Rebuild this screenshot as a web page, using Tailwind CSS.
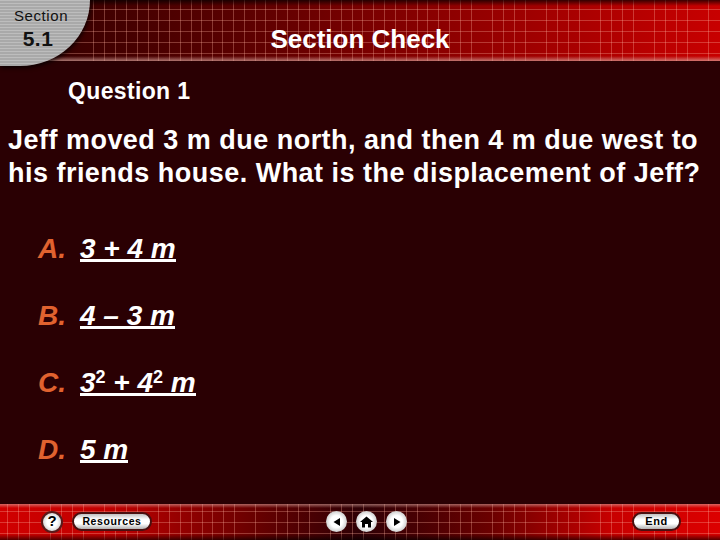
<!DOCTYPE html>
<html>
<head>
<meta charset="utf-8">
<script src="https://cdn.jsdelivr.net/npm/@tailwindcss/browser@4"></script>
</head>
<body class="m-0">
<div class="w-[720px] h-[540px] overflow-hidden flex flex-col bg-[#2a0003] font-['Liberation_Sans',Arial,sans-serif] text-white">
  <header class="relative h-[61px] shrink-0 bg-[linear-gradient(90deg,#2e0000_0%,#5a0000_33%,#8a0000_60%,#c80000_100%)]">
    <svg class="absolute inset-0" width="720" height="61" viewBox="0 0 720 61" fill="none" stroke="#ffb0a0" stroke-opacity=".32" stroke-width="1">
      <path d="M93.5 0V61M104.5 0V61M115.5 0V61M126.5 0V61M137.5 0V61M148.5 0V61M158.5 0V61M169.5 0V61M180.5 0V61M191.5 0V61M201.5 0V61M212.5 0V61M222.5 0V61M233.5 0V61M244.5 0V61M255.5 0V61M265.5 0V61M276.5 0V61M287.5 0V61M298.5 0V61M309.5 0V61M319.5 0V61M330.5 0V61M341.5 0V61M352.5 0V61M362.5 0V61M373.5 0V61M384.5 0V61M395.5 0V61M406.5 0V61M417.5 0V61M427.5 0V61M438.5 0V61M449.5 0V61M460.5 0V61M471.5 0V61M492.5 0V61M503.5 0V61M514.5 0V61M525.5 0V61M546.5 0V61M557.5 0V61M568.5 0V61M579.5 0V61M600.5 0V61M611.5 0V61M622.5 0V61M633.5 0V61M654.5 0V61M665.5 0V61M676.5 0V61M687.5 0V61M708.5 0V61"/>
      <path d="M60 9.5H720M60 20.5H720M60 31.5H720M60 42.5H720M60 53.5H720"/>
    </svg>
    <div class="absolute inset-x-0 top-0 h-[6px] bg-gradient-to-b from-black/70 to-transparent"></div>
    <div class="absolute inset-x-0 bottom-0 h-[5px] bg-gradient-to-b from-transparent to-[#d9a8a0]/70"></div>
    <div class="absolute left-0 top-0 w-[90px] h-[66px] pr-[8px] rounded-br-[70px_66px] shadow-[1px_2px_4px_rgba(0,0,0,0.75)] bg-[repeating-linear-gradient(180deg,#bdbdbd_0px,#bdbdbd_1px,#a9a9a9_1px,#a9a9a9_3px)] flex flex-col items-center text-[#111]">
      <span class="text-[15px] leading-[16px] mt-[8px] tracking-[0.6px]">Section</span>
      <span class="text-[21px] leading-[24px] mt-[3px] mr-[6px] font-bold tracking-[0.5px]">5.1</span>
    </div>
    <h1 class="relative text-center pt-[25px] text-[26px] leading-[28px] font-bold">Section Check</h1>
  </header>

  <main class="flex-1 flex flex-col">
    <p class="pl-[68px] mt-[17px] text-[23px] leading-[26px] font-bold tracking-[0.35px]">Question 1</p>
    <p class="pl-[8px] mt-[20px] text-[27px] leading-[33px] font-bold tracking-[0.48px] whitespace-nowrap">Jeff moved 3 m due north, and then 4 m due west to<br>his friends house. What is the displacement of Jeff?</p>
    <ul class="pl-[38px] mt-[42px] flex flex-col gap-[33px] text-[28px] leading-[34px] font-bold italic">
      <li class="flex gap-[14px] h-[34px]"><span class="text-[#e0622f]">A.</span><span class="h-[30px] border-b-[3px] border-white">3 + 4 m</span></li>
      <li class="flex gap-[14px] h-[34px]"><span class="text-[#e0622f]">B.</span><span class="h-[30px] border-b-[3px] border-white">4 – 3 m</span></li>
      <li class="flex gap-[14px] h-[34px]"><span class="text-[#e0622f]">C.</span><span class="h-[30px] border-b-[3px] border-white">3<sup class="text-[18px] leading-none not-italic">2</sup> + 4<sup class="text-[18px] leading-none not-italic">2</sup> m</span></li>
      <li class="flex gap-[14px] h-[34px]"><span class="text-[#e0622f]">D.</span><span class="h-[30px] border-b-[3px] border-white">5 m</span></li>
    </ul>
  </main>

  <footer class="relative h-[36px] shrink-0 bg-[linear-gradient(90deg,#d00000_0%,#c00000_15%,#6a0000_35%,#2e0005_50%,#6a0000_68%,#c80000_85%,#dc0000_100%)]">
    <svg class="absolute inset-0" width="720" height="36" viewBox="0 0 720 36" fill="none" stroke="#ffb0a0" stroke-opacity=".32" stroke-width="1">
      <path d="M7.5 0V36M18.5 0V36M29.5 0V36M50.5 0V36M61.5 0V36M72.5 0V36M83.5 0V36M104.5 0V36M115.5 0V36M126.5 0V36M137.5 0V36M158.5 0V36M169.5 0V36M180.5 0V36M191.5 0V36M202.5 0V36M212.5 0V36M223.5 0V36M234.5 0V36M255.5 0V36M276.5 0V36M287.5 0V36M298.5 0V36M309.5 0V36M330.5 0V36M341.5 0V36M352.5 0V36M363.5 0V36M384.5 0V36M395.5 0V36M406.5 0V36M417.5 0V36M438.5 0V36M449.5 0V36M460.5 0V36M471.5 0V36M492.5 0V36M503.5 0V36M514.5 0V36M525.5 0V36M546.5 0V36M557.5 0V36M568.5 0V36M579.5 0V36M600.5 0V36M611.5 0V36M622.5 0V36M633.5 0V36M654.5 0V36M665.5 0V36M676.5 0V36M687.5 0V36M708.5 0V36"/>
      <path d="M0 7.5H720M0 18.5H720M0 29.5H720"/>
    </svg>
    <div class="absolute inset-x-0 top-0 h-[4px] bg-gradient-to-b from-[#d9a8a0]/60 to-transparent"></div>
    <div class="absolute inset-x-0 bottom-0 h-[6px] bg-gradient-to-b from-transparent to-black/60"></div>
    <nav class="relative h-full flex items-center pl-[41px] pb-[1px]">
      <div class="w-[22px] h-[22px] rounded-full border-2 border-[#5a1a1a] bg-[radial-gradient(circle,#ffffff_40%,#b0b0b0_100%)] flex items-center justify-center text-black text-[15px] font-bold">?</div>
      <div class="ml-[9px] w-[80px] h-[19px] rounded-full border-2 border-[#4a1010] bg-[linear-gradient(180deg,#c0c0c0_0%,#ffffff_35%,#ffffff_65%,#b0b0b0_100%)] flex items-center justify-center text-black text-[10.5px] font-bold tracking-[0.6px]">Resources</div>
      <div class="ml-[174px] w-[21px] h-[21px] rounded-full bg-[radial-gradient(circle,#ffffff_40%,#a0a0a0_100%)] flex items-center justify-center">
        <svg width="10" height="10" viewBox="0 0 10 10"><path d="M8 1V9L1.5 5Z" fill="#000"/></svg>
      </div>
      <div class="ml-[9px] w-[21px] h-[21px] rounded-full bg-[radial-gradient(circle,#ffffff_40%,#a0a0a0_100%)] flex items-center justify-center">
        <svg width="13" height="12" viewBox="0 0 13 12"><path d="M6.5 0.5L13 6H11V11.5H8V8H5V11.5H2V6H0Z" fill="#000"/></svg>
      </div>
      <div class="ml-[9px] w-[21px] h-[21px] rounded-full bg-[radial-gradient(circle,#ffffff_40%,#a0a0a0_100%)] flex items-center justify-center">
        <svg width="10" height="10" viewBox="0 0 10 10"><path d="M2 1V9L8.5 5Z" fill="#000"/></svg>
      </div>
      <div class="ml-[225px] w-[49px] h-[19px] rounded-full border-2 border-[#4a1010] bg-[linear-gradient(180deg,#c0c0c0_0%,#ffffff_35%,#ffffff_65%,#b0b0b0_100%)] flex items-center justify-center text-black text-[11px] font-bold tracking-[0.6px]">End</div>
    </nav>
  </footer>
</div>
</body>
</html>
